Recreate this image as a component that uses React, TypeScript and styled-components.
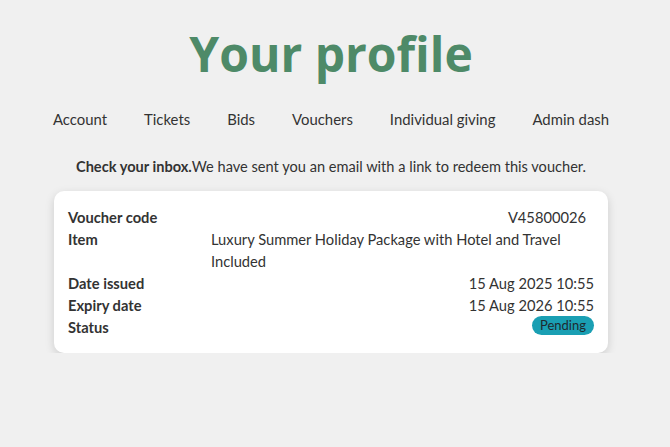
import React from "react";
import styled, { createGlobalStyle } from "styled-components";

const Global = createGlobalStyle`
  html, body { margin: 0; padding: 0; background: #f0f0f0; }
  body { font-family: Lato, "Open Sans", sans-serif; color: #333; }
`;

const Page = styled.div`
  display: flex;
  flex-direction: column;
  align-items: center;
  padding: 24px 8px 0 0;
`;

const Title = styled.h1`
  margin: 0;
  font-family: "Open Sans", sans-serif;
  font-weight: 700;
  font-size: 48px;
  line-height: 60px;
  color: #4e8a68;
`;

const Nav = styled.nav`
  display: flex;
  gap: 37px;
  margin-top: 24px;
  font-size: 14.9px;
  line-height: 22px;
`;

const NavItem = styled.span`
  color: #333;
`;

const Notice = styled.p`
  margin: 26px 0 0;
  font-size: 14.6px;
  line-height: 22px;
`;

const Card = styled.div`
  margin-top: 13px;
  width: 554px;
  box-sizing: border-box;
  background: #fff;
  border-radius: 10px;
  box-shadow: 0 3px 10px rgba(0, 0, 0, 0.15);
  padding: 15px 14px 15px;
  display: grid;
  grid-template-columns: 143px 1fr;
  font-size: 14.7px;
  line-height: 22px;
`;

const Label = styled.div`
  font-weight: 700;
`;

const Value = styled.div<{ $right?: boolean; $pad?: number }>`
  text-align: ${(p) => (p.$right ? "right" : "left")};
  padding-right: ${(p) => p.$pad ?? 0}px;
`;

const Badge = styled.span`
  display: inline-block;
  background: #1a9fb3;
  color: #1e2a30;
  font-size: 13px;
  line-height: 19px;
  padding: 0 8px;
  border-radius: 10px;
  vertical-align: top;
`;

export default function App() {
  const nav = ["Account", "Tickets", "Bids", "Vouchers", "Individual giving", "Admin dash"];
  return (
    <>
      <Global />
      <Page>
        <Title>Your profile</Title>
        <Nav>
          {nav.map((n) => (
            <NavItem key={n}>{n}</NavItem>
          ))}
        </Nav>
        <Notice>
          <b>Check your inbox.</b>We have sent you an email with a link to redeem this voucher.
        </Notice>
        <Card>
          <Label>Voucher code</Label>
          <Value $right $pad={8}>V45800026</Value>
          <Label>Item</Label>
          <Value>Luxury Summer Holiday Package with Hotel and Travel Included</Value>
          <Label>Date issued</Label>
          <Value $right>15 Aug 2025 10:55</Value>
          <Label>Expiry date</Label>
          <Value $right>15 Aug 2026 10:55</Value>
          <Label>Status</Label>
          <Value $right>
            <Badge>Pending</Badge>
          </Value>
        </Card>
      </Page>
    </>
  );
}
